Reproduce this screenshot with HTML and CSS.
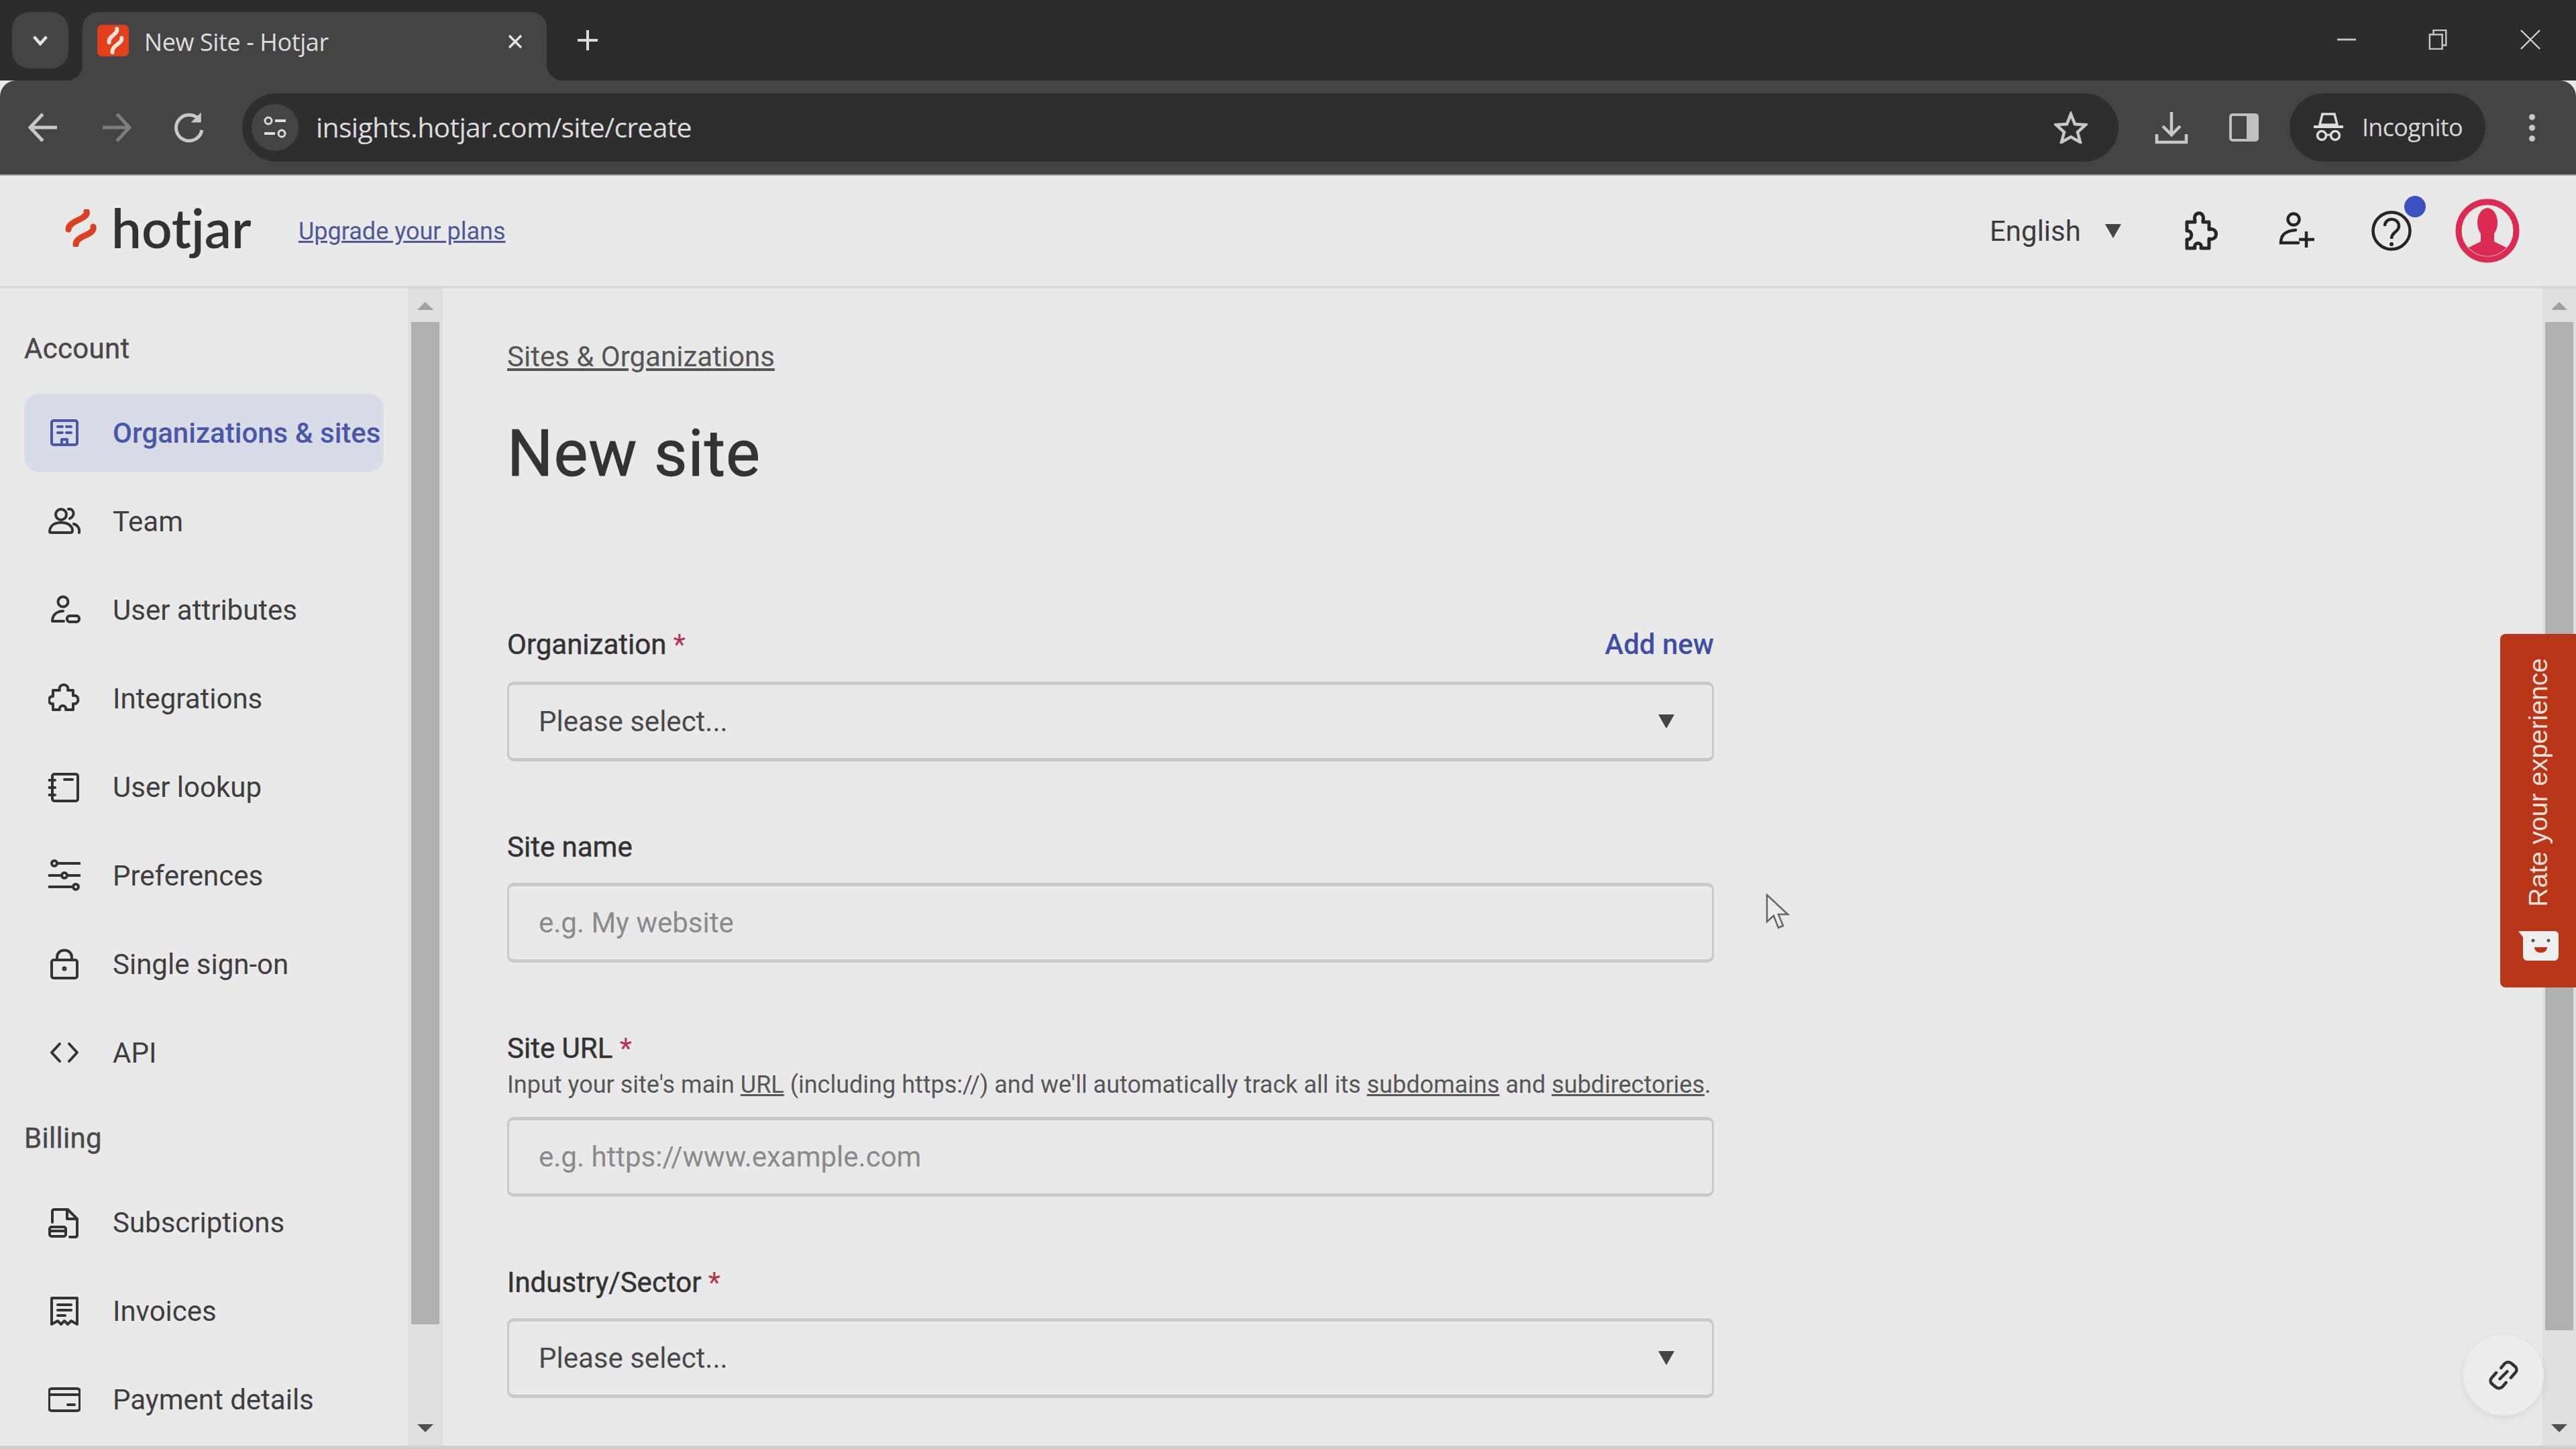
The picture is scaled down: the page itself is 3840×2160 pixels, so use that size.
FILE: index.html
```html
<!DOCTYPE html>
<html lang="en">
<head>
<meta charset="utf-8">
<title>New Site - Hotjar</title>
<link rel="stylesheet" href="styles.css">
</head>
<body>
<div class="tabstrip">
  <div class="tabsearch"><svg class="ic-s" viewBox="0 0 24 24"><path d="M5 8l7 8 7-8" fill="none" stroke="#e4e4e4" stroke-width="3.4"/></svg></div>
  <div class="tab">
    <svg class="favicon" viewBox="0 0 48 48"><rect width="48" height="48" rx="7" fill="#e2401a"/><path d="M30 6c2 9-14 11-12 21M37 20c2 9-15 10-14 22" fill="none" stroke="#f6e4dc" stroke-width="6" stroke-linecap="round"/></svg>
    <span class="tabtitle">New Site - Hotjar</span>
    <svg class="tabclose" viewBox="0 0 24 24"><path d="M3 3l18 18M21 3L3 21" stroke="#e4e4e4" stroke-width="3.4"/></svg>
  </div>
  <svg class="newtab" viewBox="0 0 32 32"><path d="M16 1v30M1 16h30" stroke="#dcdcdc" stroke-width="4"/></svg>
  <div class="winctrl">
    <svg class="winbtn" viewBox="0 0 32 32"><path d="M1 16h30" stroke="#c8c8c8" stroke-width="3"/></svg>
    <svg class="winbtn" viewBox="0 0 32 32"><path d="M2 8h20v23H2zM8 7V1h20v24h-5" fill="none" stroke="#c8c8c8" stroke-width="2.6"/></svg>
    <svg class="winbtn" viewBox="0 0 32 32"><path d="M1 1l30 30M31 1L1 31" stroke="#d8d8d8" stroke-width="2.4"/></svg>
  </div>
</div>

<div class="toolbar">
  <div class="navbtn"><svg class="ic-nav" viewBox="0 0 40 40"><path d="M36 20H5M19 4L4 20l15 16" fill="none" stroke="#c8c8c8" stroke-width="4"/></svg></div>
  <div class="navbtn"><svg class="ic-nav" viewBox="0 0 40 40"><path d="M4 20h31M21 4l15 16-15 16" fill="none" stroke="#7d7d7d" stroke-width="4"/></svg></div>
  <div class="navbtn"><svg class="ic-nav" viewBox="0 0 40 40"><path d="M33 11a15.500 15.500 0 1 0 3 12" fill="none" stroke="#c8c8c8" stroke-width="4"/><path d="M35 2v12H23z" fill="#c8c8c8"/></svg></div>
  <div class="omnibox">
    <div class="tune"><svg class="ic-tune" viewBox="0 0 36 36"><circle cx="8" cy="8" r="5" fill="none" stroke="#ddd" stroke-width="3"/><path d="M18 8h16M2 27h16" stroke="#ddd" stroke-width="4"/><circle cx="28" cy="27" r="5" fill="none" stroke="#ddd" stroke-width="3"/></svg></div>
    <span class="url">insights.hotjar.com/site/create</span>
    <svg class="star" viewBox="0 0 50 48"><path d="M25 4l6 15 16 1-12 11 4 15-14-8-14 8 4-15L3 20l16-1z" fill="none" stroke="#c8c8c8" stroke-width="4.500"/></svg>
  </div>
  <div class="navbtn"><svg class="ic-nav" viewBox="0 0 50 48"><path d="M25 1v34M12 22l13 13 13-13M3 34v12h44V34" fill="none" stroke="#c8c8c8" stroke-width="4.500"/></svg></div>
  <div class="navbtn"><svg class="ic-panel" viewBox="0 0 44 42"><rect x="2" y="2" width="40" height="38" rx="3" fill="none" stroke="#c0c0c0" stroke-width="4"/><rect x="26" y="2" width="16" height="38" fill="#c0c0c0"/></svg></div>
  <div class="incognito">
    <svg class="ic-incog" viewBox="0 0 44 44"><path d="M0 21h44" stroke="#ddd" stroke-width="4"/><path d="M9 18l4-16h18l4 16z" fill="none" stroke="#ddd" stroke-width="3.500"/><circle cx="12" cy="34" r="6.500" fill="none" stroke="#ddd" stroke-width="3.500"/><circle cx="32" cy="34" r="6.500" fill="none" stroke="#ddd" stroke-width="3.500"/><path d="M18 33h8" stroke="#ddd" stroke-width="3"/></svg>
    <span class="incog-text">Incognito</span>
  </div>
  <div class="navbtn menu"><i class="dot"></i><i class="dot"></i><i class="dot"></i></div>
</div>
<div class="toolbar-edge"></div>

<header class="apphead">
  <svg class="logomark" viewBox="0 0 50 56"><path d="M34 3c4 12-27 13-27 27M44 26c3 13-27 13-26 27" fill="none" stroke="#dc4022" stroke-width="9" stroke-linecap="round"/></svg>
  <span class="logotext">hotjar</span>
  <a class="upgrade">Upgrade your plans</a>
  <div class="headright">
    <span class="lang">English</span>
    <i class="caret caret-lang"></i>
    <svg class="hic puzzle" viewBox="0 0 56 58"><path d="M22 14c-4-15 16-15 12 0v2h9v11c14-4 14 18 0 14v14H31c3-10-12-10-9 0H10V42c9 1 9-14 0-13V16h12z" fill="none" stroke="#262626" stroke-width="5" stroke-linejoin="round"/></svg>
    <svg class="hic adduser" viewBox="0 0 54 56"><circle cx="23" cy="11" r="8.500" fill="none" stroke="#262626" stroke-width="4.500"/><path d="M30 46H4c0-12 7-18 22-19" fill="none" stroke="#262626" stroke-width="4.500" stroke-linecap="round"/><path d="M42 29v24M31 41h23" stroke="#262626" stroke-width="4.500"/></svg>
    <div class="help">
      <svg class="hic helpic" viewBox="0 0 60 60"><circle cx="30" cy="30" r="27.500" fill="none" stroke="#262626" stroke-width="4.500"/><path d="M20 23c0-14 21-13 21 0 0 9-11 8-11 19" fill="none" stroke="#262626" stroke-width="4.500"/><circle cx="30" cy="50" r="3" fill="#262626"/></svg>
      <i class="helpdot"></i>
    </div>
    <svg class="avatar" viewBox="0 0 96 96"><defs><clipPath id="av"><circle cx="48" cy="48" r="38"/></clipPath></defs><circle cx="48" cy="48" r="43" fill="#e9e9e9" stroke="#dc2a52" stroke-width="9"/><g clip-path="url(#av)" fill="#dc2a52"><ellipse cx="48" cy="36" rx="15" ry="22"/><path d="M38 52h20v12l24 12v20H14V76l24-12z"/></g></svg>
  </div>
</header>

<div class="appbody">
  <aside class="sidebar">
    <nav class="sidenav">
      <h3 class="navhead">Account</h3>
      <a class="navitem active"><svg class="nic" viewBox="0 0 48 48"><rect x="5" y="6" width="38" height="36" rx="3"/><path d="M14 15h7M27 15h7M14 24h7M27 24h7M20 42v-8h8v8"/></svg>Organizations &amp; sites</a>
      <a class="navitem"><svg class="nic" viewBox="0 0 48 48"><circle cx="19" cy="14" r="8"/><path d="M2 40c0-10 8-14 17-14s17 4 17 12c0 2-1 3-3 3H5c-2 0-3-1-3-1zM30 6c8-2 11 10 2 14M38 28c6 2 9 7 8 13"/></svg>Team</a>
      <a class="navitem"><svg class="nic" viewBox="0 0 48 48"><circle cx="22" cy="12" r="7.500"/><path d="M22 26C12 26 6 32 6 41h17"/><rect x="28" y="33" width="18" height="9" rx="4"/></svg>User attributes</a>
      <a class="navitem"><svg class="nic" viewBox="0 0 48 48"><path d="M17 12c-3-11 15-11 12 0h8v8c10-2 10 14 0 12v9H26c2-8-11-8-9 0H7v-9c-8 2-8-12 0-11v-9z"/></svg>Integrations</a>
      <a class="navitem"><svg class="nic" viewBox="0 0 48 48"><rect x="6" y="5" width="38" height="40" rx="3"/><path d="M24 13h12M1 14h9M1 25h9M1 36h9"/></svg>User lookup</a>
      <a class="navitem"><svg class="nic" viewBox="0 0 48 48"><circle cx="9" cy="6" r="4"/><circle cx="24" cy="24" r="4"/><circle cx="41" cy="41" r="4"/><path d="M13 6h34M1 24h19M28 24h19M1 41h36"/></svg>Preferences</a>
      <a class="navitem"><svg class="nic" viewBox="0 0 48 48"><rect x="5" y="18" width="38" height="27" rx="3"/><path d="M13 18v-4c0-14 22-14 22 0v4"/><circle cx="24" cy="31" r="1.500"/></svg>Single sign-on</a>
      <a class="navitem"><svg class="nic" viewBox="0 0 48 48"><path d="M17 11L5 24l12 13M31 11l12 13-12 13"/></svg>API</a>
      <h3 class="navhead billing">Billing</h3>
      <a class="navitem"><svg class="nic" viewBox="0 0 48 48"><path d="M6 24V8c0-2 1-3 3-3h20l14 14v24c0 2-1 3-3 3H32M28 5v14h15"/><rect x="2" y="31" width="24" height="14" rx="3"/><path d="M2 37h24"/></svg>Subscriptions</a>
      <a class="navitem"><svg class="nic" viewBox="0 0 48 48"><path d="M5 44V5h38v39l-9-5-5 5-5-5-5 5-5-5z"/><path d="M14 15h20M14 23h20M14 31h11"/></svg>Invoices</a>
      <a class="navitem"><svg class="nic" viewBox="0 0 48 48"><rect x="1" y="8" width="46" height="33" rx="4"/><path d="M1 17h46M29 32h10"/></svg>Payment details</a>
    </nav>
    <div class="scrollbar side-sb">
      <i class="arrow up"></i>
      <i class="thumb thumb-side"></i>
      <i class="arrow down"></i>
    </div>
  </aside>

  <main class="main">
    <a class="crumb">Sites &amp; Organizations</a>
    <h1 class="title">New site</h1>
    <form class="form">
      <div class="labelrow first">
        <label class="label">Organization <b class="req">*</b></label>
        <a class="addnew">Add new</a>
      </div>
      <div class="control select"><span>Please select...</span><i class="caret"></i></div>

      <div class="labelrow"><label class="label">Site name</label></div>
      <div class="control"><span class="ph">e.g. My website</span></div>

      <div class="labelrow"><label class="label">Site URL <b class="req">*</b></label></div>
      <p class="hint">Input your site's main <u>URL</u> (including https://) and we'll automatically track all its <u>subdomains</u> and <u>subdirectories</u>.</p>
      <div class="control tight"><span class="ph">e.g. https://www.example.com</span></div>

      <div class="labelrow"><label class="label">Industry/Sector <b class="req">*</b></label></div>
      <div class="control select"><span>Please select...</span><i class="caret"></i></div>
    </form>
  </main>

  <div class="scrollbar page-sb">
    <i class="arrow up"></i>
    <i class="thumb thumb-page"></i>
    <i class="arrow down"></i>
  </div>
</div>
<div class="bottomstrip"></div>

<div class="rate">
  <span class="rate-text">Rate your experience</span>
  <svg class="rate-icon" viewBox="0 0 60 44"><path d="M0 0h54c3 0 6 2 6 5v33c0 3-3 6-6 6H13c-3 0-6-3-6-6V9z" fill="#efefef"/><circle cx="22" cy="14" r="2.500" fill="#555"/><circle cx="45" cy="14" r="2.500" fill="#555"/><path d="M24 24h19c0 11-19 11-19 0z" fill="#b93517"/></svg>
</div>
<div class="linkbtn"><svg viewBox="0 0 48 48" class="linkic"><path d="M20 12l6-7c3-3 8-3 11 0l6 5c3 3 3 7 0 10l-7 8M28 36l-6 7c-3 3-8 3-11 0l-6-5c-3-3-3-7 0-10l7-8M18 30l12-12" fill="none" stroke="#333" stroke-width="5" stroke-linecap="round"/></svg></div>
<svg class="cursor" viewBox="0 0 36 54"><path d="M2 2v40l10-9 7 18 7-3-7-17h14z" fill="#ececec" stroke="#666" stroke-width="2.500"/></svg>
</body>
</html>
```

FILE: styles.css
```css
* { box-sizing: border-box; }
html, body { margin: 0; padding: 0; }
body {
  width: 3840px; height: 2160px; overflow: hidden;
  display: flex; flex-direction: column; position: relative;
  background: #e9e9e9; color: #3c3c3c;
  font-family: Roboto, "Liberation Sans", sans-serif;
}
h1, h3, p { margin: 0; }

/* tab strip */
.tabstrip { height: 120px; flex: none; background: #2c2c2c; display: flex; align-items: flex-start; padding: 18px 0 0 18px; }
.tabsearch { width: 84px; height: 84px; border-radius: 26px; background: #444; display: flex; align-items: center; justify-content: center; }
.ic-s { width: 32px; height: 32px; }
.tab { width: 692px; height: 102px; margin-left: 21px; background: #444; border-radius: 24px 24px 0 0; display: flex; align-items: flex-start; padding: 18px 0 0 22px; position: relative; }
.tab::before, .tab::after { content: ""; position: absolute; bottom: 0; width: 24px; height: 24px; }
.tab::before { left: -24px; background: radial-gradient(circle at 0 0, transparent 24px, #444 24.500px); }
.tab::after { right: -24px; background: radial-gradient(circle at 100% 0, transparent 24px, #444 24.500px); }
.favicon { width: 47px; height: 49px; flex: none; }
.tabtitle { margin: 2px 0 0 23px; font: 36px/50px "Open Sans", sans-serif; color: #dedede; letter-spacing: -.4px; white-space: nowrap; }
.tabclose { width: 24px; height: 24px; margin: 14px 35px 0 auto; }
.newtab { width: 32px; height: 32px; margin: 26px 0 0 45px; }
.winctrl { margin-left: auto; display: flex; margin-top: 26px; padding-right: 53px; gap: 107px; }
.winbtn { width: 30px; height: 30px; }

/* toolbar */
.toolbar { height: 140px; flex: none; background: #444; display: flex; align-items: center; padding-left: 11px; padding-right: 12px; border-radius: 24px 24px 0 0; }
.navbtn { width: 108px; height: 102px; flex: none; display: flex; align-items: center; justify-content: center; }
.ic-nav { width: 50px; height: 50px; }
.ic-panel { width: 44px; height: 42px; }
.omnibox { flex: 1; height: 102px; margin: 0 25px 0 26px; border-radius: 51px; background: #2e2e2e; display: flex; align-items: center; padding: 0 46px 0 14px; }
.tune { width: 70px; height: 70px; border-radius: 50%; background: #444; display: flex; align-items: center; justify-content: center; flex: none; }
.ic-tune { width: 36px; height: 36px; }
.url { margin: -3px 0 0 26px; font: 41px/60px "Open Sans", sans-serif; color: #dcdcdc; letter-spacing: -.73px; }
.star { width: 50px; height: 48px; margin-left: auto; }
.incognito { width: 292px; height: 102px; margin-left: 14px; flex: none; border-radius: 51px; background: #2e2e2e; display: flex; align-items: center; padding-left: 36px; }
.ic-incog { width: 44px; height: 44px; }
.incog-text { margin-left: 28px; font: 36px/50px "Open Sans", sans-serif; color: #d8d8d8; letter-spacing: -.7px; }
.menu { margin-left: 15px; flex-direction: column; gap: 7px; }
.dot { width: 9px; height: 9px; border-radius: 50%; background: #c8c8c8; }
.toolbar-edge { height: 2px; flex: none; background: #a5a5a5; }

/* app header */
.apphead { height: 168px; flex: none; border-bottom: 4px solid #d8d8da; display: flex; align-items: center; padding-left: 95px; position: relative; }
.logomark { width: 50px; height: 56px; margin-top: -8px; flex: none; }
.logotext { margin: -10px 0 0 21px; width: 212px; font: 600 80px/100px Lato, sans-serif; color: #323232; }
.upgrade { margin: 2px 0 0 67px; font-size: 36px; line-height: 48px; color: #4d579c; text-decoration: underline; white-space: nowrap; }
.headright { margin-left: auto; display: flex; align-items: center; padding-right: 84px; }
.lang { font-size: 42px; color: #3c3c3c; width: 172px; }
.caret { display: block; width: 0; height: 0; border-left: 12px solid transparent; border-right: 12px solid transparent; border-top: 21px solid #444; }
.hic { flex: none; }
.puzzle { width: 56px; height: 58px; margin-left: 88px; }
.adduser { width: 54px; height: 56px; margin-left: 90px; }
.help { position: relative; margin-left: 85px; display: flex; }
.helpic { width: 60px; height: 60px; }
.helpdot { position: absolute; left: 49px; top: -22px; width: 32px; height: 32px; border-radius: 50%; background: #3b51bf; }
.avatar { width: 96px; height: 96px; margin-left: 65px; flex: none; }

/* body */
.appbody { flex: 1; min-height: 0; display: flex; overflow: hidden; }
.sidebar { width: 660px; flex: none; display: flex; overflow: hidden; }
.sidenav { width: 608px; flex: none; padding: 60px 0 0 36px; display: flex; flex-direction: column; }
.navhead { font-size: 42px; line-height: 60px; font-weight: 400; -webkit-text-stroke: .4px #484848; color: #484848; height: 60px; margin-bottom: 36px; letter-spacing: .3px; }
.billing { margin-top: 25px; margin-bottom: 36px; }
.navitem { width: 536px; height: 118px; flex: none; margin-bottom: 14px; border-radius: 24px; display: flex; align-items: center; padding-left: 36px; font-size: 42px; color: #3e3e3e; white-space: nowrap; }
.navitem.active { background: #d8dce7; color: #4a56a8; font-weight: 500; }
.nic { width: 48px; height: 48px; margin-right: 48px; flex: none; fill: none; stroke: #333; stroke-width: 4; stroke-linejoin: round; stroke-linecap: round; }
.active .nic { stroke: #4a56a8; }

/* scrollbars */
.scrollbar { background: #dfdfdf; display: flex; flex-direction: column; align-items: center; flex: none; position: relative; }
.side-sb { width: 52px; padding-top: 20px; }
.page-sb { width: 50px; padding-top: 20px; }
.arrow { width: 0; height: 0; border-left: 12px solid transparent; border-right: 12px solid transparent; flex: none; }
.arrow.up { border-bottom: 12px solid #a0a0a0; }
.arrow.down { border-top: 12px solid #505050; margin-top: auto; margin-bottom: 20px; }
.thumb { display: block; width: 42px; background: #b0b0b0; flex: none; margin-top: 18px; }
.thumb-side { height: 1494px; }
.thumb-page { height: 1503px; }

/* main */
.main { flex: 1; min-width: 0; padding: 78px 0 0 96px; }
.crumb { display: block; font-size: 42px; line-height: 48px; color: #555; text-decoration: underline; }
.title { font-size: 96px; line-height: 120px; font-weight: 400; -webkit-text-stroke: 1px #333; color: #333; margin-top: 60px; letter-spacing: .9px; }
.form { width: 1799px; display: flex; flex-direction: column; }
.labelrow { display: flex; justify-content: space-between; align-items: center; height: 48px; margin-top: 103px; margin-bottom: 30px; }
.labelrow.first { margin-top: 200px; margin-bottom: 32px; }
.label { font-size: 42px; font-weight: 400; -webkit-text-stroke: .5px #333; color: #333; white-space: nowrap; }
.req { color: #b8324e; font-weight: 400; -webkit-text-stroke: 0; }
.addnew { font-size: 42px; font-weight: 500; color: #3f4ea5; }
.hint { font-size: 36px; line-height: 48px; color: #565656; margin-top: -23px; margin-bottom: 24px; white-space: nowrap; }
.control { height: 119px; flex: none; border: 3px solid #c8c8cb; border-top-width: 5px; border-bottom-width: 5px; border-radius: 10px; display: flex; align-items: center; justify-content: space-between; padding: 0 56px 0 44px; font-size: 42px; color: #484848; }
.ph { color: #8a8a8a; }

.bottomstrip { height: 5px; flex: none; background: #cfcfcf; }

/* overlays */
.rate { position: absolute; right: 0; top: 945px; width: 113px; height: 527px; background: #b93517; border-radius: 8px 0 0 8px; display: flex; flex-direction: column; align-items: center; padding-top: 36px; }
.rate-text { writing-mode: vertical-rl; transform: rotate(180deg); font: 39px/60px "Liberation Sans", sans-serif; color: #f5e3dc; white-space: nowrap; }
.rate-icon { width: 60px; height: 44px; margin-top: 36px; }
.linkbtn { position: absolute; left: 3672px; top: 1990px; width: 120px; height: 120px; border-radius: 50%; background: #ededed; box-shadow: 0 4px 12px rgba(0,0,0,.08); display: flex; align-items: center; justify-content: center; }
.linkic { width: 44px; height: 44px; }
.cursor { position: absolute; left: 2632px; top: 1332px; width: 36px; height: 54px; }
```
